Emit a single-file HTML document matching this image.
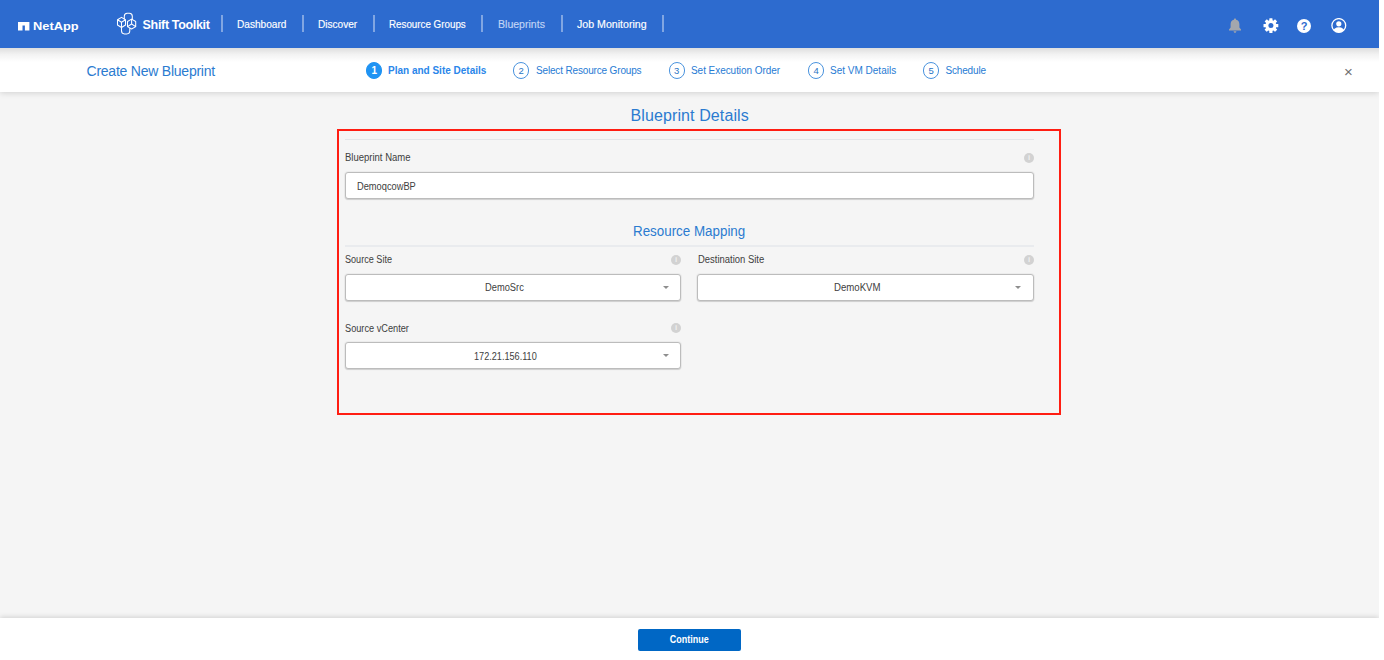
<!DOCTYPE html>
<html lang="en">
<head>
<meta charset="utf-8">
<title>Shift Toolkit - Create New Blueprint</title>
<style>
*{box-sizing:border-box;margin:0;padding:0}
html,body{width:1384px;height:660px;overflow:hidden;background:#fff}
body{font-family:"Liberation Sans",sans-serif;color:#404040;position:relative}
.t{position:absolute;white-space:nowrap;line-height:1}
#page{position:absolute;left:0;top:0;width:1379px;height:660px;background:#f5f5f5;overflow:hidden}
#hdr{position:absolute;left:0;top:0;width:1379px;height:48px;background:#2d6bcf;z-index:5}
#hdr .t{color:#fff}
#hdr .nav{-webkit-text-stroke:.15px currentColor}
#hdr .sep{position:absolute;top:15px;width:1.5px;height:17px;background:rgba(255,255,255,.4)}
#sub{position:absolute;left:0;top:48px;width:1379px;height:44px;background:#fff;box-shadow:0 1px 6px rgba(0,0,0,.15);z-index:3}
#subshade{position:absolute;left:0;top:48px;width:1379px;height:14px;background:linear-gradient(to bottom,rgba(0,0,0,.13),rgba(0,0,0,.05) 45%,rgba(0,0,0,0));z-index:4}
.blue{color:#2b7bd0}
.step{position:absolute;top:14.4px;width:16.4px;height:16.4px;border-radius:50%;border:1px solid #4a93de;color:#2b74c4;font-size:9.5px;line-height:15.8px;text-align:center}
.stp{color:#277bd4}
.step.on{background:#1f93f3;border-color:#1f93f3;color:#fff;font-weight:bold;font-size:10px}
.hr{position:absolute;height:1px;background:#e3e5e8}
.lbl{font-size:10px;color:#404040;transform-origin:0 50%}
.inp{position:absolute;height:27px;background:#fff;border:1px solid #bcbcbc;border-radius:3px;box-shadow:0 1px 1px rgba(0,0,0,.13),0 0 0 1px rgba(0,0,0,.035)}
.info{position:absolute;width:10px;height:10px;border-radius:50%;background:#d2d2d2;color:#efefef;font-size:8px;font-weight:bold;line-height:10px;text-align:center}
.caret{position:absolute;width:0;height:0;border-left:3px solid transparent;border-right:3px solid transparent;border-top:3.4px solid #8e8e8e}
#red{position:absolute;left:337px;top:129px;width:724px;height:286px;border:2px solid #ff1d12}
#foot{position:absolute;left:0;top:618px;width:1379px;height:42px;background:#fff;box-shadow:0 -1px 5px rgba(0,0,0,.15)}
#btn{position:absolute;left:638px;top:11px;width:103px;height:22px;background:#0067c5;border-radius:2px;color:#fff;font-size:10.3px;font-weight:bold;text-align:center;line-height:22px}
#btn span{display:inline-block;transform:scaleX(.872)}
</style>
</head>
<body>
<div id="page">

<div id="hdr">
  <svg style="position:absolute;left:18px;top:22px" width="12" height="9" viewBox="0 0 12 9"><path d="M0 0H11.4V8.6H6.9V3.4H4.5V8.6H0Z" fill="#fff"/></svg>
  <span class="t" id="netapp" style="left:33px;top:20.8px;font-size:11.4px;font-weight:bold;transform-origin:0 50%;transform:scaleX(1.127)">NetApp</span>
  <svg id="logo" style="position:absolute;left:115.3px;top:10.4px" width="24" height="26" viewBox="0 0 24 26" fill="none" stroke="#fff" stroke-width="1.05" stroke-linecap="round" stroke-linejoin="round">
    <path d="M6.5 7.4 L10.5 9.8 V15 L6.5 17.5 L2.5 15 V9.8 Z M2.5 9.8 L6.5 12.3 L10.5 9.8 M6.5 12.3 V17.5"/>
    <path d="M16.6 9.1 L20.7 11.5 V16.6 L16.6 19 L12.5 16.6 V11.5 Z M12.5 16.6 L16.6 14 L20.7 16.6 M16.6 14 V9.1"/>
    <path d="M9.3 8.6 V6.2 Q9.3 3.3 12.2 3.2 H14.4 Q17.3 3.3 17.3 6.2 V9.2"/>
    <path d="M6.5 17.8 V20.8 Q6.5 23.8 9.5 23.9 H11.7 Q14.8 23.8 14.8 20.8 V18.4"/>
  </svg>
  <span class="t" id="shift" style="left:142.6px;top:18.7px;font-size:12.5px;font-weight:bold;letter-spacing:-.33px">Shift Toolkit</span>
  <i class="sep" style="left:221px"></i>
  <span class="t nav" id="n1" style="left:236.8px;top:19.8px;font-size:10px;transform-origin:0 50%;transform:scaleX(1.010)">Dashboard</span>
  <i class="sep" style="left:302px"></i>
  <span class="t nav" id="n2" style="left:317.7px;top:19.8px;font-size:10px;transform-origin:0 50%;transform:scaleX(1.008)">Discover</span>
  <i class="sep" style="left:373px"></i>
  <span class="t nav" id="n3" style="left:388.6px;top:19.8px;font-size:10px;transform-origin:0 50%;transform:scaleX(0.979)">Resource Groups</span>
  <i class="sep" style="left:481px"></i>
  <span class="t nav" id="n4" style="left:497.8px;top:19.8px;font-size:10px;transform-origin:0 50%;transform:scaleX(1.055);color:#c0d4f5">Blueprints</span>
  <i class="sep" style="left:561px"></i>
  <span class="t nav" id="n5" style="left:576.7px;top:19.8px;font-size:10px;transform-origin:0 50%;transform:scaleX(1.061)">Job Monitoring</span>
  <i class="sep" style="left:662px"></i>

  <!-- bell -->
  <svg style="position:absolute;left:1228px;top:18px" width="14" height="16" viewBox="0 0 14 16"><path d="M7 0.6 C7.7 0.6 8.1 1.1 8.1 1.7 C10.3 2.2 11.4 4 11.4 6.2 V9.4 L13 11.6 V12.4 H1 V11.6 L2.6 9.4 V6.2 C2.6 4 3.7 2.2 5.9 1.7 C5.9 1.1 6.3 0.6 7 0.6 Z M5.6 13.2 H8.4 C8.4 14.1 7.8 14.7 7 14.7 C6.2 14.7 5.6 14.1 5.6 13.2 Z" fill="#a3a7ad"/></svg>
  <!-- gear -->
  <svg style="position:absolute;left:1263px;top:18px" width="16" height="16" viewBox="0.1 0.4 16 16"><g fill="#fff"><circle cx="8" cy="8" r="5.5"/><g id="teeth"><rect x="6.4" y="0.6" width="3.2" height="14.8" rx=".5"/><rect x="6.4" y="0.6" width="3.2" height="14.8" rx=".5" transform="rotate(45 8 8)"/><rect x="6.4" y="0.6" width="3.2" height="14.8" rx=".5" transform="rotate(90 8 8)"/><rect x="6.4" y="0.6" width="3.2" height="14.8" rx=".5" transform="rotate(135 8 8)"/></g></g><circle cx="8" cy="8" r="2.5" fill="#2d6bcf"/></svg>
  <!-- help -->
  <div style="position:absolute;left:1297px;top:19px;width:14px;height:14px;border-radius:50%;background:#fff;color:#2d6bcf;font-size:11px;font-weight:bold;line-height:14px;text-align:center">?</div>
  <!-- user -->
  <svg style="position:absolute;left:1331px;top:18px" width="16" height="16" viewBox="0.2 0.5 16 16"><defs><clipPath id="uc"><circle cx="8" cy="8" r="6.9"/></clipPath></defs><circle cx="8" cy="8" r="6.9" fill="none" stroke="#fff" stroke-width="1.3"/><g clip-path="url(#uc)" fill="#fff"><circle cx="8" cy="6.3" r="2.6"/><ellipse cx="8" cy="14.6" rx="6" ry="4.9"/></g></svg>
</div>

<div id="subshade"></div>
<div id="sub">
  <span class="t blue" id="ttl" style="left:86.5px;top:15.9px;font-size:14px;letter-spacing:-.23px">Create New Blueprint</span>
  <div class="step on" style="left:366px">1</div>
  <span class="t stp" id="s1" style="color:#2a86ea;left:388px;top:18.1px;font-size:10px;font-weight:bold">Plan and Site Details</span>
  <div class="step" style="left:513px">2</div>
  <span class="t stp" id="s2" style="left:536px;top:18.1px;font-size:10px;letter-spacing:-.16px">Select Resource Groups</span>
  <div class="step" style="left:668.5px">3</div>
  <span class="t stp" id="s3" style="left:691px;top:18.1px;font-size:10px;letter-spacing:-.05px">Set Execution Order</span>
  <div class="step" style="left:808px">4</div>
  <span class="t stp" id="s4" style="left:830px;top:18.1px;font-size:10px">Set VM Details</span>
  <div class="step" style="left:923px">5</div>
  <span class="t stp" id="s5" style="left:945.4px;top:18.1px;font-size:10px;letter-spacing:-.15px">Schedule</span>
  <span class="t" style="left:1343.9px;top:16px;font-size:15px;color:#707070">×</span>
</div>

<span class="t blue" id="h1" style="left:630.6px;top:108px;font-size:16px;letter-spacing:.1px">Blueprint Details</span>
<div id="red"></div>
<div class="hr" style="left:345px;top:139px;width:689px"></div>
<span class="t lbl" id="l1" style="left:345.3px;top:153px;transform:scaleX(0.950)">Blueprint Name</span>
<div class="info" style="left:1024px;top:152.5px">i</div>
<div class="inp" style="left:345px;top:172px;width:689px"></div>
<span class="t lbl" id="v1" style="left:357.3px;top:181.6px;transform:scaleX(0.928)">DemoqcowBP</span>

<span class="t blue" id="h2" style="left:633.4px;top:224px;font-size:14px;transform-origin:0 50%;transform:scaleX(.955)">Resource Mapping</span>
<div class="hr" style="left:345px;top:245px;width:689px;height:2px;background:#e9ebee"></div>

<span class="t lbl" id="l2" style="left:345.2px;top:254.6px;transform:scaleX(0.909)">Source Site</span>
<div class="info" style="left:671.2px;top:254.6px">i</div>
<div class="inp" style="left:345px;top:274px;width:336px"></div>
<span class="t lbl" id="v2" style="left:485.4px;top:283px;transform:scaleX(0.931)">DemoSrc</span>
<i class="caret" style="left:662.6px;top:286px"></i>

<span class="t lbl" id="l3" style="left:697.8px;top:254.6px;transform:scaleX(0.945)">Destination Site</span>
<div class="info" style="left:1024px;top:254.6px">i</div>
<div class="inp" style="left:697px;top:274px;width:337px"></div>
<span class="t lbl" id="v3" style="left:834.1px;top:283px;transform:scaleX(0.962)">DemoKVM</span>
<i class="caret" style="left:1015px;top:286px"></i>

<span class="t lbl" id="l4" style="left:345.2px;top:323.7px;transform:scaleX(0.920)">Source vCenter</span>
<div class="info" style="left:671.2px;top:323.4px">i</div>
<div class="inp" style="left:345px;top:342px;width:336px"></div>
<span class="t lbl" id="v4" style="left:473.7px;top:351.8px;transform:scaleX(0.912)">172.21.156.110</span>
<i class="caret" style="left:662.6px;top:354px"></i>

<div id="foot"><div id="btn"><span>Continue</span></div></div>
</div>
</body>
</html>
